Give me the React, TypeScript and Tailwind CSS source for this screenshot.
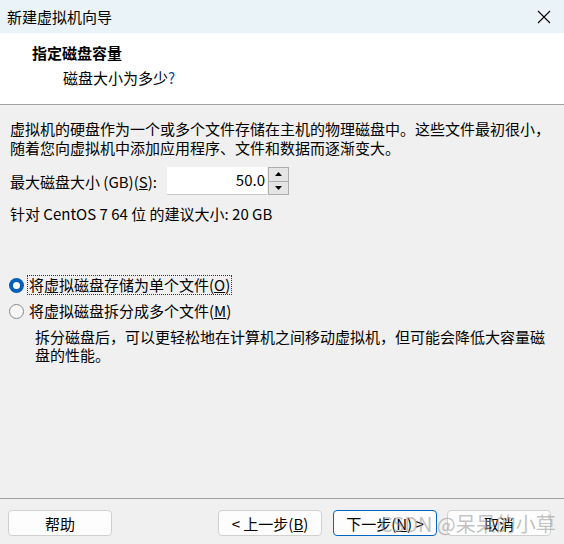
import React from "react"

function Radio({ checked }: { checked: boolean }) {
    if (checked) {
        return (
            <span className="w-[15px] h-[15px] rounded-full bg-[#005fb8] flex items-center justify-center shrink-0">
                <span className="w-[7px] h-[7px] rounded-full bg-white" />
            </span>
        )
    }
    return <span className="w-[15px] h-[15px] rounded-full border border-[#8a8a8a] bg-[#f7f7f7] shrink-0" />
}

function Button({ children, primary }: { children: React.ReactNode; primary?: boolean }) {
    return (
        <button
            className={
                primary
                    ? "w-[104px] h-[26px] rounded-[4px] border border-[#0067c0] bg-[#fdfdfd] text-[15px] leading-none text-black"
                    : "w-[104px] h-[26px] rounded-[4px] border border-[#d0d0d0] bg-[#fdfdfd] text-[15px] leading-none text-black"
            }
        >
            {children}
        </button>
    )
}

export default function App() {
    return (
        <div className="w-[564px] h-[544px] flex flex-col bg-[#f0f0f0] font-['Noto_Sans_CJK_SC',sans-serif] text-black overflow-hidden relative">
            {/* title bar */}
            <div className="h-[33px] bg-[#eaf3f7] flex items-center justify-between pl-[7px] pr-[13px] shrink-0">
                <span className="text-[15px] leading-none">新建虚拟机向导</span>
                <svg width="14" height="14" viewBox="0 0 14 14" className="text-black">
                    <path d="M1 1 L13 13 M13 1 L1 13" stroke="currentColor" strokeWidth="1.1" />
                </svg>
            </div>

            {/* header */}
            <div className="h-[72px] bg-white border-b border-[#a0a0a0] shrink-0 pt-[10px]">
                <p className="pl-[32px] text-[15px] font-bold leading-[19px]">指定磁盘容量</p>
                <p className="pl-[63px] mt-[6px] text-[15px] leading-[19px]">
                    磁盘大小为多少<span className="text-[#0a4fa8]">?</span>
                </p>
            </div>

            {/* body */}
            <div className="flex-1 pt-[14px] pl-[10px] pr-[8px]">
                <p className="text-[15px] leading-[19px]">
                    虚拟机的硬盘作为一个或多个文件存储在主机的物理磁盘中。这些文件最初很小，
                    <br />
                    随着您向虚拟机中添加应用程序、文件和数据而逐渐变大。
                </p>

                <div className="mt-[10px] flex items-center h-[28px]">
                    <span className="text-[15px] leading-none w-[157px]">
                        最大磁盘大小 (GB)(<span className="underline">S</span>):
                    </span>
                    <div className="w-[100px] h-[28px] bg-white border-b border-[#c8c8c8] flex items-center justify-end pr-[2px] text-[15px]">
                        50.0
                    </div>
                    <div className="flex flex-col h-[28px] w-[21px] ml-[1px]">
                        <div className="flex-1 border border-[#adadad] bg-[#e5e5e5] flex items-center justify-center">
                            <svg width="7" height="4" viewBox="0 0 7 4"><path d="M0 4 L3.5 0 L7 4 Z" fill="#000" /></svg>
                        </div>
                        <div className="flex-1 border border-t-0 border-[#adadad] bg-[#e5e5e5] flex items-center justify-center">
                            <svg width="7" height="4" viewBox="0 0 7 4"><path d="M0 0 L3.5 4 L7 0 Z" fill="#000" /></svg>
                        </div>
                    </div>
                </div>

                <p className="mt-[9px] text-[15px] leading-[19px]">针对 CentOS 7 64 位 的建议大小: 20 GB</p>

                <div className="mt-[52px] flex items-center h-[20px] -ml-[1px]">
                    <Radio checked />
                    <span className="ml-[4px] px-[1px] text-[15px] leading-[18px] outline outline-1 outline-dotted outline-[#333]">
                        将虚拟磁盘存储为单个文件(<span className="underline">O</span>)
                    </span>
                </div>

                <div className="mt-[6px] flex items-center h-[20px] -ml-[1px]">
                    <Radio checked={false} />
                    <span className="ml-[5px] text-[15px] leading-[18px]">
                        将虚拟磁盘拆分成多个文件(<span className="underline">M</span>)
                    </span>
                </div>

                <p className="mt-[7px] pl-[25px] text-[15px] leading-[18px]">
                    拆分磁盘后，可以更轻松地在计算机之间移动虚拟机，但可能会降低大容量磁
                    <br />
                    盘的性能。
                </p>
            </div>

            {/* footer */}
            <div className="h-[46px] border-t border-[#a0a0a0] shrink-0 pt-[11px] pl-[8px] pr-[13px] flex items-start">
                <Button>帮助</Button>
                <div className="ml-auto flex gap-[11px]">
                    <Button>
                        &lt; 上一步(<span className="underline">B</span>)
                    </Button>
                    <Button primary>
                        下一步(<span className="underline">N</span>) &gt;
                    </Button>
                    <div className="ml-[-1px]">
                        <Button>取消</Button>
                    </div>
                </div>
            </div>

            {/* watermark */}
            <span className="absolute left-[380px] top-[511px] text-[20px] leading-[26px] text-[#9a9a9a]/60 pointer-events-none whitespace-nowrap">
                CSDN @呆呆的小草
            </span>
        </div>
    )
}
